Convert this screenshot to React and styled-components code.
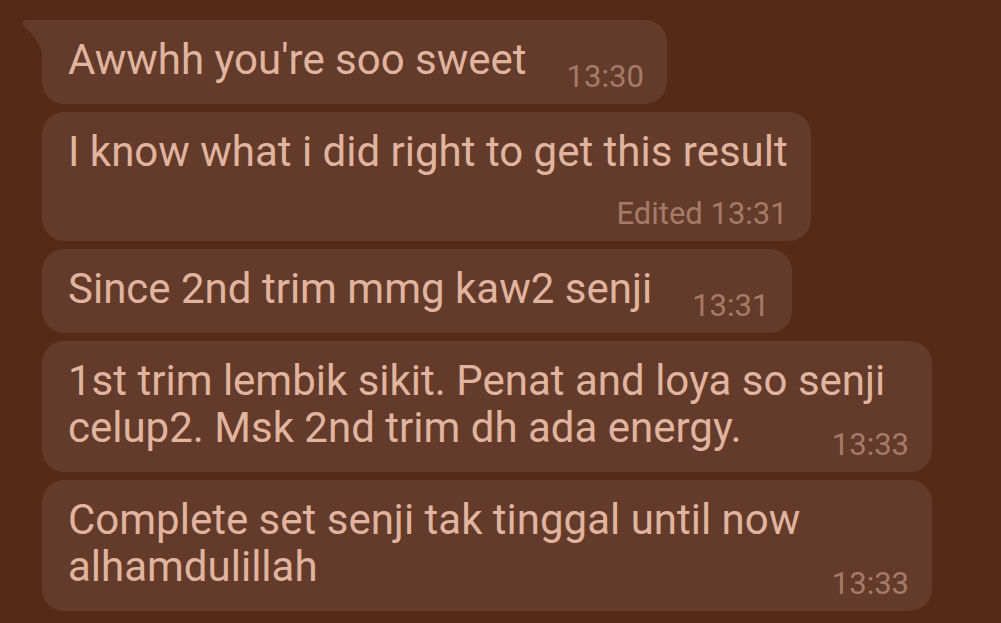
import React from "react";
import styled, { createGlobalStyle } from "styled-components";

const Global = createGlobalStyle`
  html, body {
    margin: 0;
    padding: 0;
    background: #562a18;
    overflow: hidden;
  }
  * { box-sizing: border-box; }
`;

const Chat = styled.div`
  width: 1001px;
  height: 623px;
  background: #562a18;
  padding: 20px 0 0 42px;
  display: flex;
  flex-direction: column;
  align-items: flex-start;
  gap: 8px;
  font-family: Roboto, "Noto Sans", sans-serif;
`;

const Bubble = styled.div`
  position: relative;
  display: flow-root;
  width: fit-content;
  max-width: 890px;
  background: #633b2a;
  border-radius: ${(p) => (p.$tail ? "0 22px 22px 22px" : "22px")};
  padding: 15.5px 23px 9.5px 26px;
`;

const Tail = styled.svg`
  position: absolute;
  left: -20px;
  top: 0;
  width: 21px;
  height: 36px;
  fill: #633b2a;
`;

const Text = styled.span`
  font-size: 42px;
  line-height: 47px;
  color: #e0b49e;
`;

const Meta = styled.span`
  float: ${(p) => (p.$below ? "none" : "right")};
  display: ${(p) => (p.$below ? "block" : "inline")};
  text-align: right;
  margin: ${(p) => (p.$below ? "21px 0 0 0" : "23px 0 0 40px")};
  font-size: 31px;
  line-height: 36px;
  color: #a57b68;
`;

const messages = [
  { text: "Awwhh you're soo sweet", time: "13:30", tail: true },
  { text: "I know what i did right to get this result", time: "Edited 13:31", below: true },
  { text: "Since 2nd trim mmg kaw2 senji", time: "13:31" },
  { text: "1st trim lembik sikit. Penat and loya so senji celup2. Msk 2nd trim dh ada energy.", time: "13:33" },
  { text: "Complete set senji tak tinggal until now alhamdulillah", time: "13:33" },
];

export default function App() {
  return (
    <>
      <Global />
      <Chat>
        {messages.map((m, i) => (
          <Bubble key={i} $tail={m.tail}>
            {m.tail && (
              <Tail viewBox="0 0 21 36">
                <path d="M4 0 L21 0 L21 36 L20 34 C18 24 12 15 2 6 C0 4 1 0 4 0 Z" />
              </Tail>
            )}
            <Text>{m.text}</Text>
            <Meta $below={m.below}>{m.time}</Meta>
          </Bubble>
        ))}
      </Chat>
    </>
  );
}
